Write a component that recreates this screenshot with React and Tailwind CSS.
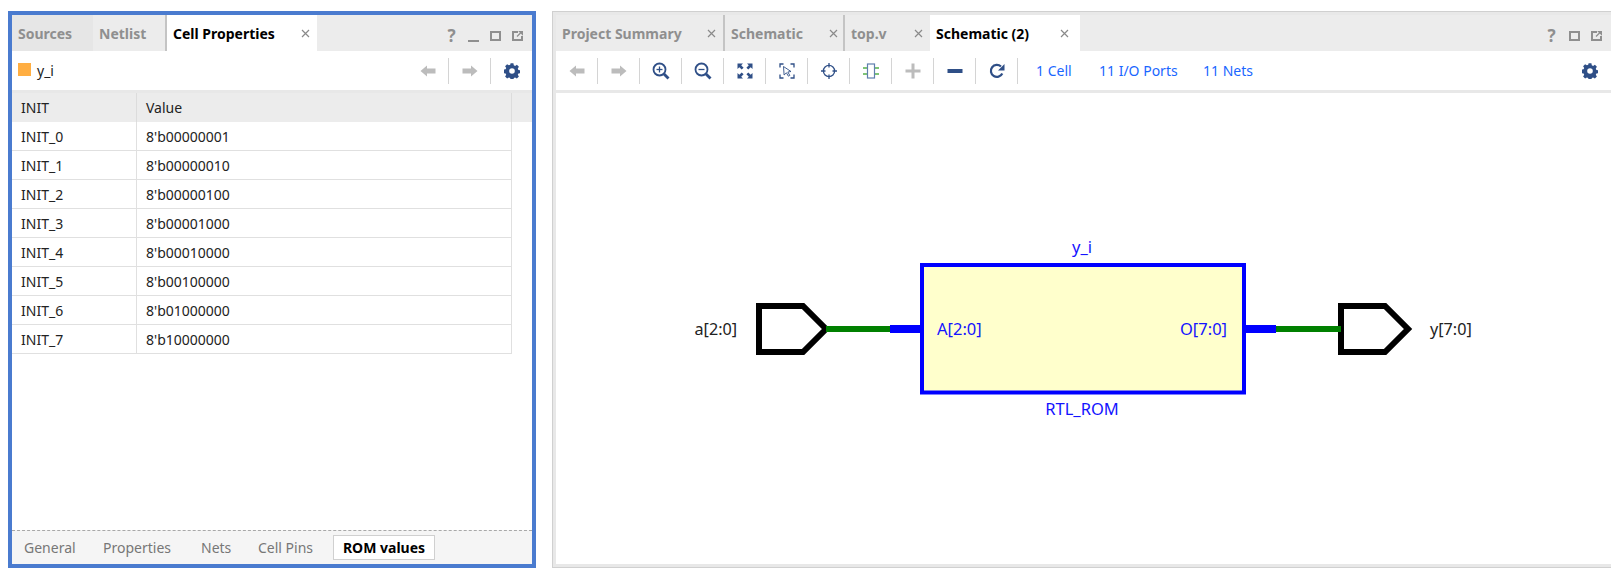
import React from 'react';

const font = { fontFamily: '"Noto Sans", sans-serif' };

const Arrow = ({ dir = 'left', on = false }) => (
  <svg width="16" height="12" viewBox="0 0 16 12" className={dir === 'right' ? 'rotate-180' : ''}>
    <path d="M0.5 6 L7 0.5 V3.5 H15.5 V8.5 H7 V11.5 Z" fill={on ? '#2f4f87' : '#bcbcbc'} />
  </svg>
);

const Gear = () => (
  <svg width="16" height="16" viewBox="0 0 16 16">
    <path
      fill="#2f4f87"
      fillRule="evenodd"
      d="M6.6 0.3h2.8l.4 2 1.3.6 1.8-1.1 2 2-1.1 1.8.6 1.3 2 .4v2.8l-2 .4-.6 1.3 1.1 1.8-2 2-1.8-1.1-1.3.6-.4 2H6.6l-.4-2-1.3-.6-1.8 1.1-2-2 1.1-1.8-.6-1.3-2-.4V6.7l2-.4.6-1.3L1.1 3.2l2-2 1.8 1.1 1.3-.6zM8 5.2a2.8 2.8 0 1 0 0 5.6 2.8 2.8 0 0 0 0-5.6z"
    />
  </svg>
);

const Zoom = ({ plus }) => (
  <svg width="18" height="18" viewBox="0 0 18 18" fill="none" stroke="#2f4f87">
    <circle cx="7.5" cy="7.5" r="6" strokeWidth="1.8" />
    <path d="M12 12l4.5 4.5" strokeWidth="2.8" />
    <path d="M4.5 7.5h6" strokeWidth="1.3" />
    {plus && <path d="M7.5 4.5v6" strokeWidth="1.3" />}
  </svg>
);

const FitAll = () => (
  <svg width="16" height="16" viewBox="0 0 16 16" fill="#2f4f87">
    <path d="M0.5 0.5h5.5L4.2 2.3 6.6 4.7 4.7 6.6 2.3 4.2 0.5 6z" />
    <path d="M15.5 0.5H10l1.8 1.8-2.4 2.4 1.9 1.9 2.4-2.4L15.5 6z" />
    <path d="M0.5 15.5H6l-1.8-1.8 2.4-2.4-1.9-1.9-2.4 2.4L0.5 10z" />
    <path d="M15.5 15.5H10l1.8-1.8-2.4-2.4 1.9-1.9 2.4 2.4 1.8-1.8z" />
  </svg>
);

const FitSelect = () => (
  <svg width="16" height="16" viewBox="0 0 16 16" fill="none">
    <path d="M1 4.5V1h3.500M11.500 1H15v3.500M15 11.500V15h-3.500M4.500 15H1v-3.500" stroke="#2f4f87" strokeWidth="1.300" />
    <path d="M4.500 3.500l7.500 5-3.200.5 2 3.400-1.400.8-2-3.400-2.300 2.200z" fill="#fff" stroke="#2f4f87" strokeWidth="0.900" />
  </svg>
);

const Target = () => (
  <svg width="16" height="16" viewBox="0 0 16 16" fill="none" stroke="#2f4f87" strokeWidth="1.3">
    <circle cx="8" cy="8" r="5.6" />
    <path d="M8 0v4.5M8 11.5V16M0 8h4.5M11.5 8H16" />
  </svg>
);

const Chip = () => (
  <svg width="16" height="16" viewBox="0 0 16 16" fill="none">
    <path d="M0 5h4M0 11h4M12 5h4M12 11h4" stroke="#54b14b" strokeWidth="1.4" />
    <rect x="4.5" y="1" width="7" height="14" fill="#fff" stroke="#5f7fae" strokeWidth="1.2" />
  </svg>
);

const Plus = () => (
  <svg width="16" height="16" viewBox="0 0 16 16" fill="#bcbcbc">
    <path d="M6.5 0.5h3v6h6v3h-6v6h-3v-6h-6v-3h6z" />
  </svg>
);

const Minus = () => (
  <svg width="16" height="16" viewBox="0 0 16 16" fill="#2f4f87">
    <rect x="0.5" y="6" width="15" height="4" />
  </svg>
);

const Refresh = () => (
  <svg width="16" height="16" viewBox="0 0 16 16" fill="none">
    <path d="M13.3 10.5A6 6 0 1 1 12 3.5" stroke="#2f4f87" strokeWidth="2.2" />
    <path d="M15.5 1v6.5H9z" fill="#2f4f87" />
  </svg>
);

const Maximize = () => (
  <svg width="11" height="10" viewBox="0 0 11 10" fill="none" stroke="#8f8f8f" strokeWidth="2">
    <rect x="1" y="1" width="9" height="8" />
  </svg>
);

const Popout = () => (
  <svg width="11" height="10" viewBox="0 0 11 10" fill="none">
    <path d="M6 1H1v8h9V5" stroke="#8f8f8f" strokeWidth="2" />
    <path d="M11 0v4L7 0zM8.5 2L5 5.5" fill="#8f8f8f" stroke="#8f8f8f" strokeWidth="1.2" />
  </svg>
);

const Close = () => (
  <svg width="9" height="9" viewBox="0 0 9 9" stroke="#8a8a8a" strokeWidth="1.2">
    <path d="M1 1l7 7M8 1l-7 7" />
  </svg>
);

const Tab = ({ label, width, pad = 6, padRight = 7, active, dark, sep, close }) => (
  <div
    className={`flex h-full shrink-0 items-center justify-between text-[14px] font-bold ${
      active ? 'bg-white text-black' : dark ? 'bg-[#e6e6e6] text-[#8f8f8f]' : 'text-[#8f8f8f]'
    } ${sep ? 'border-r-2 border-[#c4c4c4]' : ''}`}
    style={{ width, paddingLeft: pad, paddingRight: padRight }}
  >
    <span className="whitespace-nowrap">{label}</span>
    {close && <Close />}
  </div>
);

const WindowIcons = ({ minimize }) => (
  <div className="mt-[6px] ml-auto flex items-center pr-[4px]">
    <span className="mb-[1px] w-[23px] text-center text-[17px] leading-none font-bold text-[#8f8f8f]">?</span>
    {minimize && (
      <span className="flex h-[10px] w-[21px] items-end justify-center">
        <span className="mb-[-1px] h-[2px] w-[11px] bg-[#8f8f8f]" />
      </span>
    )}
    <span className="flex w-[22px] justify-center"><Maximize /></span>
    <span className="flex w-[22px] justify-center"><Popout /></span>
  </div>
);

const ToolBtn = ({ children }) => (
  <div className="flex h-[26px] w-[42px] shrink-0 items-center justify-center border-r border-[#d4d4d4]">
    {children}
  </div>
);

const romRows = [
  ['INIT_0', "8'b00000001"],
  ['INIT_1', "8'b00000010"],
  ['INIT_2', "8'b00000100"],
  ['INIT_3', "8'b00001000"],
  ['INIT_4', "8'b00010000"],
  ['INIT_5', "8'b00100000"],
  ['INIT_6', "8'b01000000"],
  ['INIT_7', "8'b10000000"],
];

const CellProperties = () => (
  <section className="flex h-[557px] w-[528px] shrink-0 flex-col border-4 border-[#4a7bcf] bg-white">
    <div className="flex h-[36px] shrink-0 items-center bg-[#ececec]">
      <Tab label="Sources" width={81} pad={6} dark />
      <Tab label="Netlist" width={74} pad={6} sep />
      <Tab label="Cell Properties" width={150} pad={6} active close />
      <WindowIcons minimize />
    </div>
    <div className="flex h-[39px] shrink-0 items-center pl-[6px]">
      <span className="mb-[2px] h-[13px] w-[13px] bg-[#ffae42]" />
      <span className="ml-[6px] text-[14px] text-[#222]">y_i</span>
      <div className="ml-auto flex items-center">
        <ToolBtn><Arrow /></ToolBtn>
        <ToolBtn><Arrow dir="right" /></ToolBtn>
        <div className="flex h-[26px] w-[41px] items-center justify-center"><Gear /></div>
      </div>
    </div>
    <div className="h-[3px] shrink-0 bg-[#e8e8e8]" />
    <div className="flex h-[29px] shrink-0 bg-[#ececec] text-[14px] text-[#222]">
      <div className="flex w-[125px] items-center border-r border-[#dcdcdc] pl-[9px]">INIT</div>
      <div className="flex w-[375px] items-center border-r border-[#dcdcdc] pl-[9px]">Value</div>
    </div>
    <div className="w-[500px] flex-1 text-[14px] text-[#222]">
      {romRows.map(([name, value]) => (
        <div key={name} className="flex h-[29px] items-center border-r border-b border-[#e0e0e0]">
          <div className="flex h-full w-[125px] items-center border-r border-[#e0e0e0] pl-[9px]">{name}</div>
          <div className="pl-[9px]">{value}</div>
        </div>
      ))}
    </div>
    <div className="flex h-[34px] shrink-0 items-center border-t border-dashed border-[#a8a8a8] bg-[#f5f5f5] text-[14px] text-[#777]">
      <span className="ml-[12px] w-[79px]">General</span>
      <span className="w-[98px]">Properties</span>
      <span className="w-[57px]">Nets</span>
      <span className="w-[75px]">Cell Pins</span>
      <span className="flex h-[25px] w-[102px] items-center justify-center border border-[#d0d0d0] bg-white font-bold text-black">ROM values</span>
    </div>
  </section>
);

const Port = ({ x }) => (
  <path
    d={`M${x} 306 H${x + 44} L${x + 67} 329 L${x + 44} 352 H${x} Z`}
    fill="#fff"
    stroke="#000"
    strokeWidth="6"
    strokeLinejoin="miter"
  />
);

// schematic canvas uses page coordinates so the numbers match the screenshot
const Schematic = () => (
  <svg width="1055" height="471" viewBox="556 93 1055 471" className="block" style={font}>
    <Port x={759} />
    <Port x={1341} />
    <rect x="826" y="326" width="65" height="6" fill="#008000" />
    <rect x="1276" y="326" width="65" height="6" fill="#008000" />
    <rect x="890" y="325" width="31" height="8" fill="#0000ff" />
    <rect x="1245" y="325" width="31" height="8" fill="#0000ff" />
    <rect x="922" y="265" width="322" height="127.5" fill="#ffffcc" stroke="#0000ff" strokeWidth="4" />
    <text x="694.5" y="335" fontSize="16.2" fill="#222">a[2:0]</text>
    <text x="1430" y="335" fontSize="16.2" fill="#222">y[7:0]</text>
    <text x="937" y="335" fontSize="16.5" fill="#1414ff">A[2:0]</text>
    <text x="1227" y="335" fontSize="16.5" fill="#1414ff" textAnchor="end">O[7:0]</text>
    <text x="1082" y="253" fontSize="16.5" fill="#1414ff" textAnchor="middle">y_i</text>
    <text x="1082" y="415" fontSize="16.5" fill="#1414ff" textAnchor="middle">RTL_ROM</text>
  </svg>
);

const SchematicPanel = () => (
  <section className="h-[557px] w-[1063px] shrink-0 border border-[#d0d0d0] bg-white">
    <div className="flex h-full flex-col border-[3px] border-[#e8e8e8]">
      <div className="flex h-[36px] shrink-0 items-center bg-[#ececec]">
        <Tab label="Project Summary" width={169} sep close />
        <Tab label="Schematic" width={120} padRight={5} sep close />
        <Tab label="top.v" width={85} close />
        <Tab label="Schematic (2)" width={150} padRight={11} active close />
        <WindowIcons />
      </div>
      <div className="flex h-[39px] shrink-0 items-center">
        <ToolBtn><Arrow /></ToolBtn>
        <ToolBtn><Arrow dir="right" /></ToolBtn>
        <ToolBtn><Zoom plus /></ToolBtn>
        <ToolBtn><Zoom /></ToolBtn>
        <ToolBtn><FitAll /></ToolBtn>
        <ToolBtn><FitSelect /></ToolBtn>
        <ToolBtn><Target /></ToolBtn>
        <ToolBtn><Chip /></ToolBtn>
        <ToolBtn><Plus /></ToolBtn>
        <ToolBtn><Minus /></ToolBtn>
        <ToolBtn><Refresh /></ToolBtn>
        <span className="ml-[18px] w-[63px] text-[14px] text-[#1a66ff]">1 Cell</span>
        <span className="w-[104px] text-[14px] text-[#1a66ff]">11 I/O Ports</span>
        <span className="text-[14px] text-[#1a66ff]">11 Nets</span>
        <span className="mr-[13px] ml-auto"><Gear /></span>
      </div>
      <div className="h-[3px] shrink-0 bg-[#e8e8e8]" />
      <div className="min-h-0 flex-1 overflow-hidden"><Schematic /></div>
    </div>
  </section>
);

export default function App() {
  return (
    <div className="flex h-[569px] w-[1611px] gap-[16px] overflow-hidden bg-white pt-[11px] pl-[8px]" style={font}>
      <CellProperties />
      <SchematicPanel />
    </div>
  );
}
